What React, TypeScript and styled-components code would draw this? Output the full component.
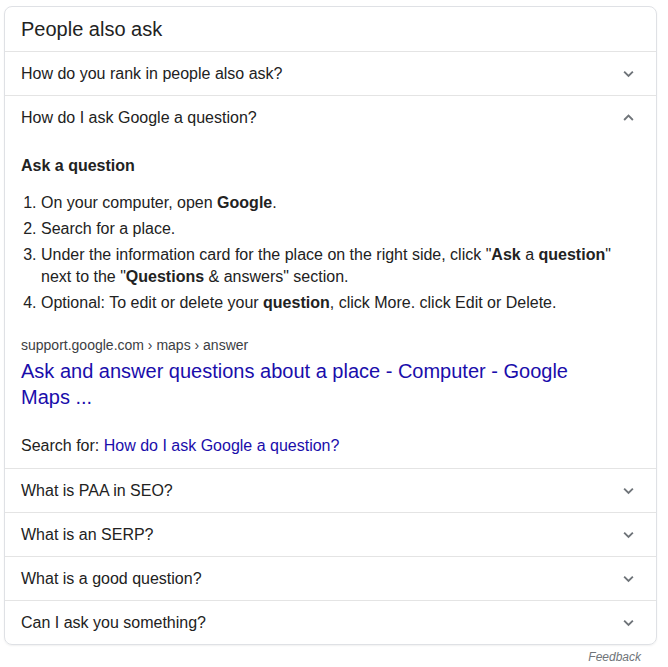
import React from "react";
import styled, { createGlobalStyle } from "styled-components";

const Global = createGlobalStyle`
  html, body { margin: 0; padding: 0; background: #fff; }
  body { font-family: "Liberation Sans", Arial, sans-serif; color: #222; }
`;

const Page = styled.div`
  padding: 6px 11px 0 4px;
`;

const Card = styled.div`
  border: 1px solid #dfe1e5;
  border-radius: 8px;
  box-shadow: 0 1px 2px rgba(0,0,0,0.06);
  overflow: hidden;
`;

const Header = styled.div`
  height: 44px;
  display: flex;
  align-items: center;
  padding: 0 16px;
  font-size: 20px;
  color: #222;
  border-bottom: 1px solid #e4e4e4;
`;

const Row = styled.div<{ $last?: boolean }>`
  border-bottom: ${(p) => (p.$last ? "none" : "1px solid #e4e4e4")};
`;

const RowHead = styled.div`
  height: 43px;
  display: flex;
  align-items: center;
  justify-content: space-between;
  padding: 0 20px 0 16px;
  font-size: 16px;
  color: #222;
`;

const Chevron = styled.svg`
  width: 15px;
  height: 15px;
  flex: none;
`;

const Body = styled.div`
  padding: 16px 16px 11px 16px;
`;

const Heading = styled.div`
  font-size: 16px;
  line-height: 22px;
  font-weight: bold;
  color: #222;
`;

const List = styled.ol`
  margin: 15px 0 0 0;
  padding: 0 0 0 20px;
  font-size: 16px;
  line-height: 22px;
  color: #222;
  li { margin-bottom: 4px; }
  li:last-child { margin-bottom: 0; }
`;

const Url = styled.div`
  margin-top: 21px;
  font-size: 14px;
  line-height: 20px;
  color: #3c4043;
`;

const Title = styled.a`
  display: block;
  margin-top: 3px;
  font-size: 20px;
  line-height: 26px;
  color: #1a0dab;
  text-decoration: none;
  max-width: 570px;
`;

const SearchFor = styled.div`
  margin-top: 25px;
  font-size: 16px;
  line-height: 22px;
  color: #222;
  a { color: #1a0dab; text-decoration: none; }
`;

const Feedback = styled.div`
  text-align: right;
  padding-right: 16px;
  margin-top: 5px;
  font-size: 12px;
  font-style: italic;
  color: #70757a;
`;

const Arrow = ({ up }: { up?: boolean }) => (
  <Chevron viewBox="0 0 24 24">
    <path
      d={up ? "M5 16 L12 9 L19 16" : "M5 9 L12 16 L19 9"}
      fill="none"
      stroke="#70757a"
      strokeWidth="3"
    />
  </Chevron>
);

const questions = [
  "What is PAA in SEO?",
  "What is an SERP?",
  "What is a good question?",
  "Can I ask you something?",
];

export default function App() {
  return (
    <Page>
      <Global />
      <Card>
        <Header>People also ask</Header>
        <Row>
          <RowHead>
            How do you rank in people also ask?
            <Arrow />
          </RowHead>
        </Row>
        <Row>
          <RowHead>
            How do I ask Google a question?
            <Arrow up />
          </RowHead>
          <Body>
            <Heading>Ask a question</Heading>
            <List>
              <li>On your computer, open <b>Google</b>.</li>
              <li>Search for a place.</li>
              <li>
                Under the information card for the place on the right side, click "<b>Ask</b> a <b>question</b>" next to the "<b>Questions</b> &amp; answers" section.
              </li>
              <li>
                Optional: To edit or delete your <b>question</b>, click More. click Edit or Delete.
              </li>
            </List>
            <Url>support.google.com › maps › answer</Url>
            <Title href="#">Ask and answer questions about a place - Computer - Google Maps ...</Title>
            <SearchFor>
              Search for: <a href="#">How do I ask Google a question?</a>
            </SearchFor>
          </Body>
        </Row>
        {questions.map((q, i) => (
          <Row key={q} $last={i === questions.length - 1}>
            <RowHead>
              {q}
              <Arrow />
            </RowHead>
          </Row>
        ))}
      </Card>
      <Feedback>Feedback</Feedback>
    </Page>
  );
}
